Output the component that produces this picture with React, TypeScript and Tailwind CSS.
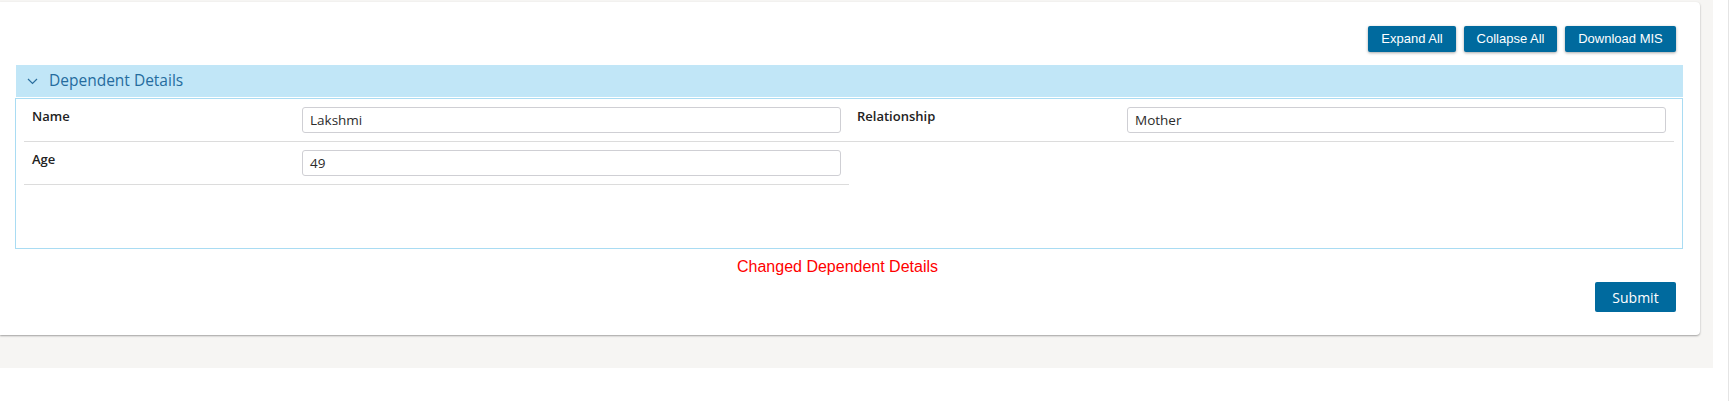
import React from 'react';

interface Field {
  label: string;
  value: string;
}

const fields: Field[] = [
  { label: 'Name', value: 'Lakshmi' },
  { label: 'Relationship', value: 'Mother' },
  { label: 'Age', value: '49' },
];

const ActionButton: React.FC<{ label: string; width: string }> = ({ label, width }) => (
  <button
    className={`${width} h-[26px] bg-[#006a9e] text-white text-[13px] rounded-[2px] shadow-[0_1px_3px_rgba(0,0,0,0.35)] font-['Liberation_Sans',Arial,sans-serif]`}
  >
    {label}
  </button>
);

const FieldRow: React.FC<{ field: Field }> = ({ field }) => (
  <div className="flex items-start border-b border-[#dcdcdc] py-2 pr-2">
    <div className="w-[278px] shrink-0 pl-2 text-[13px] leading-[18px] font-semibold text-[#222]">
      {field.label}
    </div>
    <div className="flex-1 h-[26px] border border-[#cfcfd4] rounded-[3px] px-[7px] flex items-center text-[13.5px] font-medium text-[#2b2b2b]">
      {field.value}
    </div>
  </div>
);

const App: React.FC = () => {
  return (
    <div className="flex w-full h-[401px] bg-white font-['Open_Sans','Noto_Sans',sans-serif]">
      <div className="w-[1713px] h-fit bg-[#f6f5f3] pt-[2px] pb-[33px] shrink-0">
        <div className="w-[1700px] bg-white rounded-r-[4px] shadow-[0_1px_2px_rgba(0,0,0,0.35)] pt-6 pb-[23px]">
          <div className="flex justify-end gap-2 pr-6">
            <ActionButton label="Expand All" width="w-[88px]" />
            <ActionButton label="Collapse All" width="w-[93px]" />
            <ActionButton label="Download MIS" width="w-[111px]" />
          </div>

          <div className="mt-[13px] ml-[15px] mr-[17px]">
            <div className="h-[32px] bg-[#c1e6f7] flex items-center pl-[11px] ml-px">
              <svg width="11" height="7" viewBox="0 0 11 7" className="shrink-0">
                <polyline points="1,1 5.5,5.5 10,1" fill="none" stroke="#2a6e9e" strokeWidth="1.2" />
              </svg>
              <span className="ml-[11px] text-[15.5px] text-[#256c9e]">Dependent Details</span>
            </div>
            <div className="mt-px border border-[#a9dcf3] min-h-[151px] px-2">
              <div className="grid grid-cols-2">
                {fields.map((f) => (
                  <FieldRow key={f.label} field={f} />
                ))}
              </div>
            </div>
          </div>

          <div className="mt-2 pr-[25px] text-center text-[16px] leading-[20px] text-[#ff0000] font-['Liberation_Sans',Arial,sans-serif]">
            Changed Dependent Details
          </div>

          <div className="flex justify-end pr-6 mt-[5px]">
            <button className="w-[81px] h-[30px] bg-[#006a9e] text-white text-[14px] rounded-[2px]">
              Submit
            </button>
          </div>
        </div>
      </div>
      <div className="w-[15px] shrink-0" />
      <div className="w-px h-full bg-[#e4e4e4] shrink-0" />
    </div>
  );
};

export default App;
